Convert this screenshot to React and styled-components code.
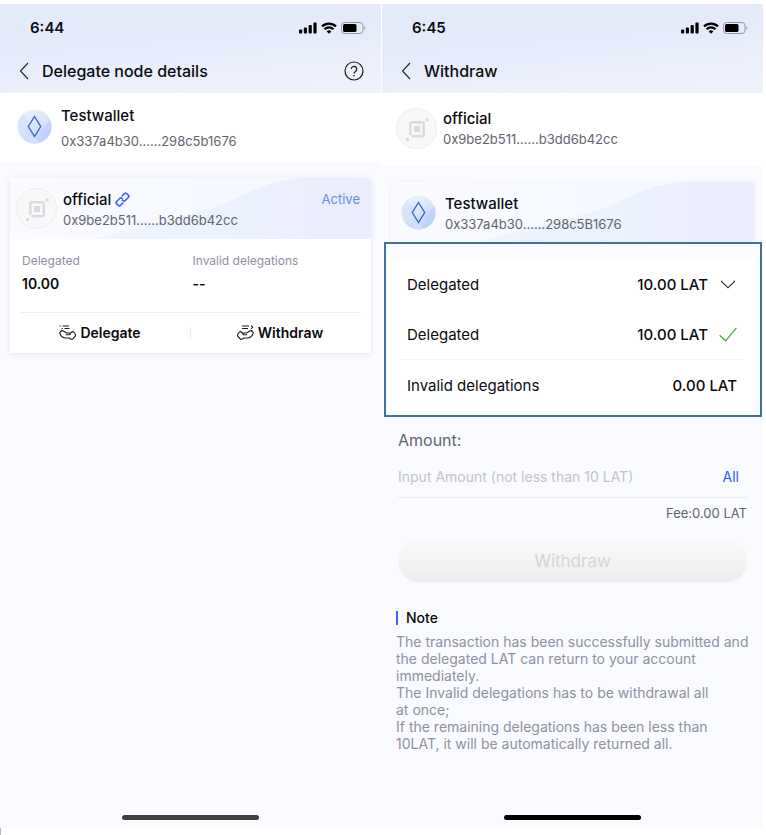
import React from "react";
import styled, { createGlobalStyle } from "styled-components";

const GlobalStyle = createGlobalStyle`
  *, *::before, *::after { box-sizing: border-box; }
  body {
    margin: 0;
    background: #ffffff;
    color: #0b0b0d;
    font-family: Inter, "Liberation Sans", sans-serif;
    font-size: 14px;
  }
  h1, h2, h3, p, dl, dd { margin: 0; }
  button, input { font: inherit; color: inherit; margin: 0; padding: 0; border: 0; background: none; }
  svg { display: block; flex: none; }
`;

const Page = styled.main`
  display: grid;
  grid-template-columns: 1fr 1fr;
  gap: 1px;
  padding: 4px 3px 0 0;
`;

const PageFoot = styled.footer`
  height: 7px;
  border-left: 1px solid #b8b8bc;
`;

const Phone = styled.section`
  display: flex;
  flex-direction: column;
  min-width: 0;
  min-height: calc(100vh - 11px);
  background: #fafbff;
`;

const Header = styled.header`
  height: 89px;
  background: linear-gradient(175deg, #e3eafa 0%, #e5ebfa 45%, #edf1fa 85%);
`;

const StatusBar = styled.div`
  display: flex;
  align-items: center;
  justify-content: space-between;
  height: 47px;
  padding: 0 15px 0 30px;
`;

const Clock = styled.span`
  font-size: 15px;
  font-weight: 600;
`;

const StatusIcons = styled.div`
  display: flex;
  align-items: center;
  gap: 4px;
`;

const NavBar = styled.div`
  display: flex;
  align-items: center;
  height: 40px;
  padding: 0 17px 0 19px;
`;

const IconButton = styled.button`
  display: flex;
  cursor: pointer;
`;

const Title = styled.h1`
  flex: 1;
  margin-left: 12px;
  font-size: 16px;
  font-weight: 500;
  line-height: 20px;
`;

const AccountBar = styled.div`
  display: flex;
  align-items: center;
  gap: ${(p) => p.$gap};
  height: ${(p) => p.$height};
  padding: 0 ${(p) => p.$inset} 2px;
  background: #ffffff;
`;

const Names = styled.div`
  display: flex;
  flex: 1;
  flex-direction: column;
  gap: ${(p) => p.$gap || "0"};
  min-width: 0;
  padding-top: ${(p) => p.$drop || "0"};
`;

const Name = styled.h2`
  display: flex;
  align-items: center;
  gap: 4px;
  font-size: 15px;
  font-weight: 500;
  line-height: 20px;
`;

const Address = styled.span`
  color: #61646e;
  font-size: 13px;
  line-height: 20px;
`;

const CardHead = styled.div`
  position: relative;
  display: flex;
  align-items: center;
  gap: ${(p) => p.$gap};
  height: ${(p) => p.$height};
  padding: 0 11px 0 ${(p) => p.$left};
  border-radius: 4px;
  overflow: hidden;
  isolation: isolate;
  background: linear-gradient(90deg, #fafbff 0%, #f2f7ff 100%);
`;

const WaveArt = styled.svg`
  position: absolute;
  inset: 0;
  z-index: -1;
  width: 100%;
  height: 100%;
`;

const State = styled.span`
  align-self: flex-start;
  margin-top: 11px;
  color: #5f90e3;
  font-size: 13px;
  line-height: 20px;
`;

const NodeCard = styled.article`
  margin: 16px 10px 0;
  background: #ffffff;
  box-shadow: 0 1px 6px rgba(60, 70, 110, 0.12);
`;

const Stats = styled.dl`
  display: grid;
  grid-template-columns: 1fr 1fr;
  height: 73px;
  padding: 12px 8px 0 12px;
`;

const StatLabel = styled.dt`
  color: #8e91a1;
  font-size: 12px;
  line-height: 20px;
`;

const StatValue = styled.dd`
  padding-top: 3px;
  font-weight: 600;
  line-height: 20px;
`;

const Actions = styled.div`
  display: grid;
  grid-template-columns: 1fr 1px 1fr;
  align-items: center;
  height: 41px;
  margin: 0 10px;
  border-top: 1px solid #efeff3;
`;

const ActionSplit = styled.span`
  height: 12px;
  background: #ededf1;
`;

const ActionButton = styled.button`
  display: flex;
  align-items: center;
  justify-content: center;
  gap: 4px;
  height: 40px;
  padding: ${(p) => p.$pad};
  font-weight: 600;
  cursor: pointer;
`;

const WalletCard = styled.div`
  margin: 16px 9px 0;
  box-shadow: 0 1px 5px rgba(60, 70, 110, 0.07);
`;

const Highlight = styled.div`
  position: relative;
  margin: 0 1px 0 2px;
  padding: 15px 6px 5px;
  border: 2px solid #41709c;
  background: #fafbff;
`;

const Picker = styled.div`
  background: #ffffff;
`;

const PickerRow = styled.button`
  display: flex;
  align-items: center;
  width: 100%;
  height: 50px;
  padding: 0 17px 0 15px;
  font-size: 15px;
  text-align: left;
  cursor: pointer;
`;

const RowRule = styled.div`
  height: 1px;
  margin: 0 10px;
  background: #f3f3f6;
`;

const RowName = styled.span`
  flex: 1;
`;

const RowValue = styled.span`
  font-weight: 500;
`;

const RowIcon = styled.span`
  display: flex;
  justify-content: center;
  width: 18px;
  margin-left: 11px;
`;

const Form = styled.form`
  display: flex;
  flex-direction: column;
  padding: 13px 16px 0;
`;

const AmountLabel = styled.label`
  color: #61646e;
  font-size: 16px;
  line-height: 20px;
`;

const AmountRow = styled.div`
  display: flex;
  align-items: center;
  gap: 8px;
  height: 48px;
  padding: 6px 8px 0 0;
  border-bottom: 1px solid #eaebef;
`;

const AmountInput = styled.input`
  flex: 1;
  min-width: 0;
  outline: 0;
  &::placeholder { color: #c2c3c9; opacity: 1; }
`;

const AllButton = styled.button`
  color: #3259ee;
  cursor: pointer;
`;

const Fee = styled.p`
  padding: 5px 0 16px;
  color: #61646e;
  font-size: 13px;
  line-height: 20px;
  text-align: right;
`;

const SubmitButton = styled.button`
  height: 43px;
  border-radius: 22px;
  background: linear-gradient(180deg, #fafafa 0%, #f5f5f5 40%, #ececec 100%);
  box-shadow: 0 1px 1px rgba(0, 0, 0, 0.04);
  color: #d6d6d6;
  font-size: 17px;
`;

const NoteBlock = styled.section`
  padding: 26px 12px 0 14px;
`;

const NoteTitle = styled.h3`
  display: flex;
  align-items: center;
  gap: 8px;
  font-size: 14px;
  font-weight: 500;
  line-height: 20px;
  &::before {
    content: "";
    width: 2px;
    height: 14px;
    background: #3d63f2;
  }
`;

const NoteText = styled.p`
  color: #8e91a1;
  line-height: 17px;
  white-space: nowrap;
  &:first-of-type { margin-top: 5px; }
`;

const HomeBar = styled.div`
  width: 36%;
  height: 5px;
  margin: auto auto 8px;
  border-radius: 3px;
  background: ${(p) => p.$color};
`;

const Signal = () => (
  <svg width="18" height="12" viewBox="0 0 18 12" fill="#000" aria-hidden="true">
    <rect x="0" y="7.500" width="3.200" height="4" rx="1" />
    <rect x="4.800" y="5.500" width="3.200" height="6" rx="1" />
    <rect x="9.600" y="3" width="3.200" height="8.500" rx="1" />
    <rect x="14.400" y=".5" width="3.200" height="11" rx="1" />
  </svg>
);

const Wifi = () => (
  <svg width="16" height="12" viewBox="0 0 16 12" aria-hidden="true">
    <g fill="none" stroke="#000" strokeWidth="2.200">
      <path d="M1 4.400a10 10 0 0 1 14 0" />
      <path d="M3.600 7.300a6.200 6.200 0 0 1 8.800 0" />
    </g>
    <path d="M8 11.700 5.700 9.400a3.300 3.300 0 0 1 4.600 0z" fill="#000" />
  </svg>
);

const Battery = () => (
  <svg width="25" height="12" viewBox="0 0 25 12" aria-hidden="true">
    <rect x=".5" y=".5" width="21.500" height="11" rx="3" fill="none" stroke="#97999f" />
    <rect x="2" y="2" width="13.500" height="8" rx="1.500" fill="#000" />
    <path d="M23.300 4v4q1-.7 1-2t-1-2z" fill="#97999f" />
  </svg>
);

const BackIcon = () => (
  <svg width="11" height="18" viewBox="0 0 11 18" fill="none" stroke="#222" strokeWidth="1.100" aria-hidden="true">
    <path d="M9 1 1.500 9 9 17" />
  </svg>
);

const HelpIcon = () => (
  <svg width="20" height="20" viewBox="0 0 20 20" fill="none" stroke="#1a1a1c" strokeWidth="1.200" aria-hidden="true">
    <circle cx="10" cy="10" r="9" />
    <path d="M7.300 8a2.700 2.700 0 1 1 4.300 2.200C10.500 11 10 11.400 10 12.600" />
    <circle cx="10" cy="14.800" r=".8" fill="#1a1a1c" stroke="none" />
  </svg>
);

const WalletAvatar = ({ id }) => (
  <svg width="35" height="35" viewBox="0 0 35 35" aria-hidden="true">
    <defs>
      <linearGradient id={id} x1="0" y1="0" x2=".6" y2="1">
        <stop offset="0" stopColor="#eef3ff" />
        <stop offset=".5" stopColor="#dfe8fd" />
        <stop offset="1" stopColor="#bccefb" />
      </linearGradient>
      <clipPath id={`${id}-clip`}>
        <circle cx="17.500" cy="17.500" r="17" />
      </clipPath>
    </defs>
    <g clipPath={`url(#${id}-clip)`}>
      <rect width="35" height="35" fill={`url(#${id})`} />
      <path d="M0 8 6 4l9 13L3 31z" fill="#d3dffc" opacity=".6" />
      <path d="m22 24 13-15v26z" fill="#bccdfa" opacity=".5" />
      <path d="m8 35 7-9 9 9z" fill="#d7e2fd" opacity=".8" />
    </g>
    <path d="m17.500 7.500 6.200 10-6.200 10-6.200-10z" fill="none" stroke="#3a66cf" strokeWidth="1.400" />
  </svg>
);

const NodeAvatar = () => (
  <svg width="41" height="41" viewBox="0 0 41 41" aria-hidden="true">
    <circle cx="20.500" cy="20.500" r="20" fill="#f8f8f9" stroke="#ededee" />
    <g fill="none" stroke="#d9dae1" strokeWidth="2.400">
      <path d="M14.300 27V16q0-1.700 1.700-1.700h10" />
      <path d="M15.500 28.200H26q1.800 0 1.800-1.700V16q0-1.700-1.300-1.700" />
    </g>
    <g fill="#d9dae1">
      <rect x="18" y="18" width="6" height="6" />
      <rect x="29.500" y="10.500" width="3" height="3" />
      <rect x="10" y="30" width="3" height="3" />
    </g>
  </svg>
);

const Wave = ({ id }) => (
  <WaveArt viewBox="0 0 361 61" preserveAspectRatio="none" aria-hidden="true">
    <defs>
      <linearGradient id={id}>
        <stop offset="0" stopColor="#eef5fe" />
        <stop offset=".45" stopColor="#ecf2fe" />
        <stop offset=".75" stopColor="#ebeefd" />
        <stop offset="1" stopColor="#eaecfd" />
      </linearGradient>
    </defs>
    <path d="M85 61C135 46 195 35 222 22S265 2 292 0H361V61Z" fill={`url(#${id})`} />
  </WaveArt>
);

const LinkIcon = () => (
  <svg width="15" height="15" viewBox="0 0 15 15" fill="none" stroke="#3a62f5" strokeWidth="1.600" aria-hidden="true">
    <g transform="rotate(-45 7.500 7.500)">
      <path d="M5.800 10.200H2Q.3 10.200.3 8.500v-2Q.3 4.800 2 4.800h4.200Q7.900 4.800 7.900 6.500v1.200" />
      <path d="M9.200 4.800H13q1.700 0 1.700 1.700v2q0 1.700-1.700 1.700H8.800Q7.100 10.200 7.100 8.500V7.300" />
    </g>
  </svg>
);

const hand =
  "M6.800 9.800h3.400c1.300 0 1.200-1.800 0-1.800H7.500L3.800 5.700C2.600 5 1.300 6 1.600 7.100M2.600 6.900C1.400 6.300.4 7.400.9 8.500c.9 2.400 3 4.300 5.600 4.500h3.600l1.700 1.200h1.800l3-3.700c-.3-1.800-1.300-3.300-2.900-4l-2.500 1.700";

const DelegateIcon = () => (
  <svg width="17" height="15" viewBox="0 0 17 15" fill="none" stroke="#1b1b1d" strokeWidth="1.100" aria-hidden="true">
    <path d="M3.500 1H10M5.500 3.500h5" />
    <path d="M.6 1h1.200M2.500 3.500h1.200" />
    <path d={hand} />
  </svg>
);

const WithdrawIcon = () => (
  <svg width="17" height="15" viewBox="0 0 17 15" fill="none" stroke="#1b1b1d" strokeWidth="1.100" aria-hidden="true">
    <path d="M5 1h7M5 3.500h6M14 .6l1.700 1.500L14 3.800" />
    <g transform="matrix(-1 0 0 1 17 0)">
      <path d={hand} />
    </g>
  </svg>
);

const ChevronDown = () => (
  <svg width="16" height="9" viewBox="0 0 16 9" fill="none" stroke="#1b1b1d" strokeWidth="1.100" aria-hidden="true">
    <path d="m1 .8 7 7 7-7" />
  </svg>
);

const CheckIcon = () => (
  <svg width="18" height="15" viewBox="0 0 18 15" fill="none" stroke="#45a53c" strokeWidth="1.200" aria-hidden="true">
    <path d="m.6 8.200 6 5.600L17.400.8" />
  </svg>
);

function PhoneHeader({ time, title, help }) {
  return (
    <Header>
      <StatusBar>
        <Clock>{time}</Clock>
        <StatusIcons>
          <Signal />
          <Wifi />
          <Battery />
        </StatusIcons>
      </StatusBar>
      <NavBar>
        <IconButton type="button" aria-label="Back">
          <BackIcon />
        </IconButton>
        <Title>{title}</Title>
        {help && (
          <IconButton type="button" aria-label="Help">
            <HelpIcon />
          </IconButton>
        )}
      </NavBar>
    </Header>
  );
}

function Identity({ name, address, gap, drop, link }) {
  return (
    <Names $gap={gap} $drop={drop}>
      <Name>
        {name}
        {link && <LinkIcon />}
      </Name>
      <Address>{address}</Address>
    </Names>
  );
}

function NodeDetails() {
  return (
    <Phone>
      <PhoneHeader time="6:44" title="Delegate node details" help />
      <AccountBar $height="69px" $inset="17px" $gap="9px">
        <WalletAvatar id="wallet-a" />
        <Identity name="Testwallet" address="0x337a4b30......298c5b1676" gap="5px" drop="4px" />
      </AccountBar>
      <NodeCard>
        <CardHead $height="61px" $left="6px" $gap="6px">
          <Wave id="wave-a" />
          <NodeAvatar />
          <Identity name="official" address="0x9be2b511......b3dd6b42cc" drop="2px" link />
          <State>Active</State>
        </CardHead>
        <Stats>
          <div>
            <StatLabel>Delegated</StatLabel>
            <StatValue>10.00</StatValue>
          </div>
          <div>
            <StatLabel>Invalid delegations</StatLabel>
            <StatValue>--</StatValue>
          </div>
        </Stats>
        <Actions>
          <ActionButton type="button" $pad="0 10px 2px 0">
            <DelegateIcon />
            Delegate
          </ActionButton>
          <ActionSplit />
          <ActionButton type="button" $pad="0 0 2px 8px">
            <WithdrawIcon />
            Withdraw
          </ActionButton>
        </Actions>
      </NodeCard>
      <HomeBar $color="#404040" />
    </Phone>
  );
}

function Withdraw() {
  return (
    <Phone>
      <PhoneHeader time="6:45" title="Withdraw" />
      <AccountBar $height="73px" $inset="14px" $gap="6px">
        <NodeAvatar />
        <Identity name="official" address="0x9be2b511......b3dd6b42cc" />
      </AccountBar>
      <WalletCard>
        <CardHead $height="60px" $left="10px" $gap="9px">
          <Wave id="wave-b" />
          <WalletAvatar id="wallet-b" />
          <Identity name="Testwallet" address="0x337a4b30......298c5B1676" drop="4px" />
        </CardHead>
      </WalletCard>
      <Highlight>
        <Picker>
          <PickerRow type="button" aria-expanded="true">
            <RowName>Delegated</RowName>
            <RowValue>10.00 LAT</RowValue>
            <RowIcon>
              <ChevronDown />
            </RowIcon>
          </PickerRow>
          <PickerRow type="button">
            <RowName>Delegated</RowName>
            <RowValue>10.00 LAT</RowValue>
            <RowIcon>
              <CheckIcon />
            </RowIcon>
          </PickerRow>
          <RowRule />
          <PickerRow type="button">
            <RowName>Invalid delegations</RowName>
            <RowValue>0.00 LAT</RowValue>
          </PickerRow>
        </Picker>
      </Highlight>
      <Form onSubmit={(e) => e.preventDefault()}>
        <AmountLabel htmlFor="amount">Amount:</AmountLabel>
        <AmountRow>
          <AmountInput id="amount" inputMode="decimal" placeholder="Input Amount (not less than 10 LAT)" />
          <AllButton type="button">All</AllButton>
        </AmountRow>
        <Fee>Fee:0.00 LAT</Fee>
        <SubmitButton type="submit" disabled>
          Withdraw
        </SubmitButton>
      </Form>
      <NoteBlock>
        <NoteTitle>Note</NoteTitle>
        <NoteText>
          The transaction has been successfully submitted and
          <br />
          the delegated LAT can return to your account
          <br />
          immediately.
        </NoteText>
        <NoteText>
          The Invalid delegations has to be withdrawal all
          <br />
          at once;
        </NoteText>
        <NoteText>
          If the remaining delegations has been less than
          <br />
          10LAT, it will be automatically returned all.
        </NoteText>
      </NoteBlock>
      <HomeBar $color="#000000" />
    </Phone>
  );
}

export default function App() {
  return (
    <>
      <GlobalStyle />
      <Page>
        <NodeDetails />
        <Withdraw />
      </Page>
      <PageFoot />
    </>
  );
}
